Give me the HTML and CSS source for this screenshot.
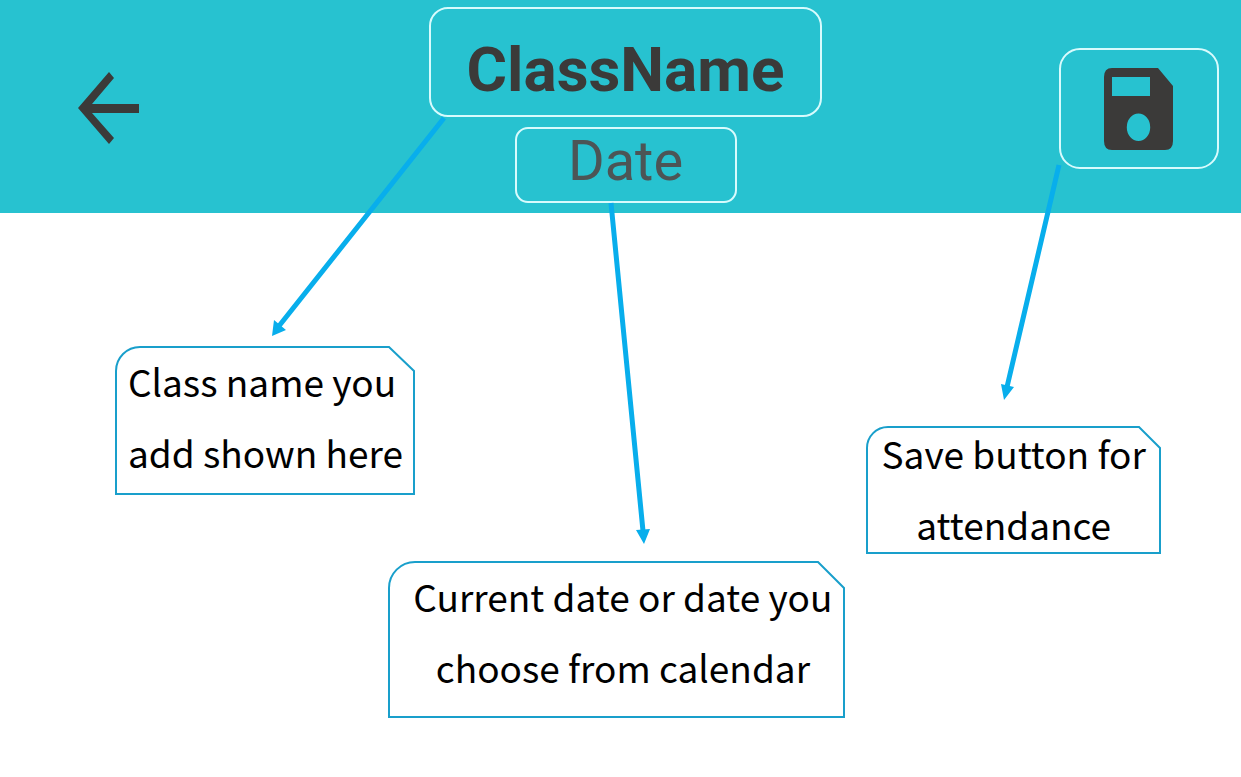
FILE: index.html
```html
<!DOCTYPE html>
<html lang="en">
<head>
<meta charset="utf-8">
<meta name="viewport" content="width=device-width, initial-scale=1">
<title>Attendance toolbar guide</title>
<link rel="stylesheet" href="styles.css">
</head>
<body>
<main class="guide">
  <header class="toolbar">
    <button class="back" type="button" aria-label="Back">
      <svg width="62" height="74" viewBox="0 0 62 74" aria-hidden="true"><path d="M31 0 36 6 14 32H61V41H14L36 66 31 72 0 36Z"/></svg>
    </button>
    <div class="titles">
      <h1 class="class-name">ClassName</h1>
      <p class="date">Date</p>
    </div>
    <button class="save" type="button" aria-label="Save">
      <svg width="70" height="82" viewBox="0 0 70 82" aria-hidden="true"><path fill-rule="evenodd" d="M8 0H54L69 18V73Q69 82 61 82H8Q0 82 0 73V9Q0 0 8 0ZM8 9V28H46V9ZM34.500 45.500A11.500 13.500 0 1 0 34.500 73A11.500 13.500 0 1 0 34.500 45.500Z"/></svg>
    </button>
  </header>

  <p class="callout callout-class">
    <svg class="outline" viewBox="0 0 300 149" preserveAspectRatio="none" aria-hidden="true"><path d="M1 148V25A24 24 0 0 1 25 1H274L299 25V148Z"/></svg>
    <span class="label">Class name you<br>add shown here</span>
  </p>
  <p class="callout callout-date">
    <svg class="outline" viewBox="0 0 457 157" preserveAspectRatio="none" aria-hidden="true"><path d="M1 156V27A26 26 0 0 1 27 1H430L456 27V156Z"/></svg>
    <span class="label">Current date or date you<br>choose from calendar</span>
  </p>
  <p class="callout callout-save">
    <svg class="outline" viewBox="0 0 295 128" preserveAspectRatio="none" aria-hidden="true"><path d="M1 127V22A21 21 0 0 1 22 1H273L294 22V127Z"/></svg>
    <span class="label">Save button for<br>attendance</span>
  </p>

  <svg class="arrows" viewBox="0 0 1241 777" preserveAspectRatio="none" aria-hidden="true">
    <path class="line" d="M444 118 279 326M611 203 643 531M1059 165 1007 387"/>
    <path class="head" d="M272 336 274 320 286 330ZM644 544 636 530 650 529ZM1004 400 1001 384 1014 387Z"/>
  </svg>
</main>
</body>
</html>
```
FILE: styles.css
```css
* {
  box-sizing: border-box;
}

body {
  margin: 0;
  background: #fff;
}

.guide {
  position: relative;
  min-height: 100vh;
}

.toolbar {
  display: grid;
  grid-template-columns: 1fr auto 1fr;
  align-items: center;
  min-height: 213px;
  padding: 7px 22px 3px 32px;
  background: #27c2d0;
  color: #3b3a39;
  font-family: Roboto, sans-serif;
}

.back,
.save {
  display: flex;
  align-items: center;
  justify-content: center;
  padding: 0;
  border: 0;
  background: none;
  color: inherit;
  cursor: pointer;
}

.back svg,
.save svg {
  fill: currentColor;
}

.back {
  justify-self: start;
  margin-left: 46px;
}

.save {
  justify-self: end;
  width: 160px;
  height: 121px;
  border: 2px solid #d8fbfd;
  border-radius: 21px;
}

.titles {
  display: flex;
  flex-direction: column;
  align-items: center;
  align-self: start;
  gap: 10px;
}

.class-name,
.date {
  margin: 0;
  border: 2px solid #d8fbfd;
  text-align: center;
}

.class-name {
  padding: 16px 36px 0;
  border-radius: 19px;
  font-size: 62px;
  font-weight: 700;
  line-height: 90px;
}

.date {
  width: 222px;
  padding-bottom: 8px;
  border-radius: 13px;
  color: #4c5556;
  font-size: 56px;
  font-weight: 400;
  line-height: 64px;
}

.callout {
  position: absolute;
  display: flex;
  justify-content: center;
  margin: 0;
  color: #000;
  font-family: "Noto Sans CJK SC", sans-serif;
  font-size: 37px;
  line-height: 71px;
  white-space: nowrap;
}

.label {
  position: relative;
}

.callout-class {
  top: 346px;
  left: 9.3%;
  width: 300px;
  height: 149px;
}

.callout-date {
  top: 561px;
  left: 31.3%;
  width: 457px;
  height: 157px;
  padding-left: 12px;
  text-align: center;
}

.callout-save {
  top: 426px;
  left: 69.8%;
  align-items: center;
  width: 295px;
  height: 128px;
  padding-bottom: 2px;
  text-align: center;
}

.outline {
  position: absolute;
  inset: 0;
  width: 100%;
  height: 100%;
  fill: #fff;
  stroke: #199fcb;
  stroke-width: 2;
}

.arrows {
  position: absolute;
  top: 0;
  left: 0;
  width: 100%;
  height: 777px;
  pointer-events: none;
}

.line {
  fill: none;
  stroke: #08aeec;
  stroke-width: 5;
}

.head {
  fill: #08aeec;
}
```
